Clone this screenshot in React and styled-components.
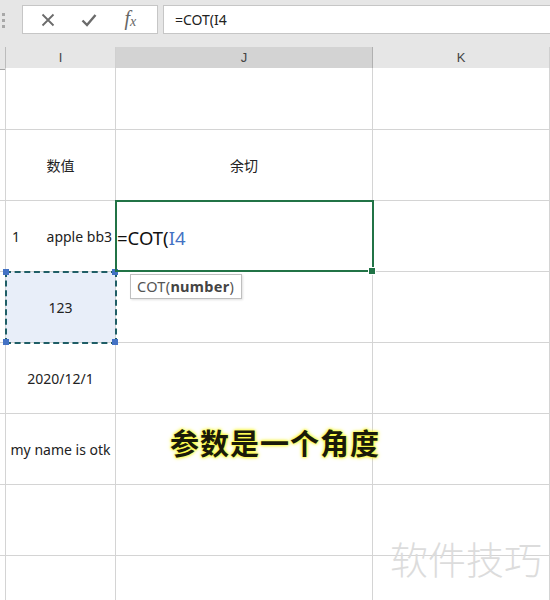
import React from 'react';
import styled, { createGlobalStyle } from 'styled-components';

const GlobalStyle = createGlobalStyle`
    html, body {
        margin: 0;
        padding: 0;
        background: #fff;
    }
    body {
        font-family: "Noto Sans", "Noto Sans CJK SC", sans-serif;
    }
`;

const COLS = '6px 110px 257px 1fr';

const rows = [
    { h: 62, i: '', j: null },
    { h: 71, i: '数值', j: '余切' },
    { h: 71, i: 'split', j: 'active' },
    { h: 71, i: '123', j: '', selected: true },
    { h: 71, i: '2020/12/1', j: '' },
    { h: 71, i: 'my name is otk', j: '' },
    { h: 71, i: '', j: '' },
    { h: 71, i: '', j: '' },
];

const Sheet = () => (
    <Page>
        <GlobalStyle />
        <FormulaBar>
            <Grip>
                <span /><span /><span />
            </Grip>
            <ButtonBox>
                <BarIcon>
                    <svg width="14" height="14" viewBox="0 0 14 14">
                        <path d="M1.5 1.5 L12.5 12.5 M12.5 1.5 L1.5 12.5" stroke="#6b6b6b" strokeWidth="1.8" fill="none" />
                    </svg>
                </BarIcon>
                <BarIcon>
                    <svg width="16" height="14" viewBox="0 0 16 14">
                        <path d="M1.5 7.5 L6 12 L14.5 2" stroke="#6b6b6b" strokeWidth="2.4" fill="none" />
                    </svg>
                </BarIcon>
                <BarIcon>
                    <Fx>f<sub>x</sub></Fx>
                </BarIcon>
            </ButtonBox>
            <FormulaInput>=COT(I4</FormulaInput>
        </FormulaBar>

        <HeaderRow>
            <HeadCell />
            <HeadCell>I</HeadCell>
            <HeadCell active>J</HeadCell>
            <HeadCell>K</HeadCell>
        </HeaderRow>

        {rows.map((r, idx) => (
            <Row key={idx} style={{ height: r.h }}>
                <Gutter />
                <Cell selected={r.selected}>
                    {r.i === 'split' ? (
                        <Split>
                            <span>1</span>
                            <span>apple bb3</span>
                        </Split>
                    ) : r.i}
                    {r.selected && (
                        <>
                            <Handle style={{ left: -3, top: -3 }} />
                            <Handle style={{ right: -3, top: -3 }} />
                            <Handle style={{ left: -3, bottom: -3 }} />
                            <Handle style={{ right: -3, bottom: -3 }} />
                        </>
                    )}
                </Cell>
                {r.j === 'active' ? (
                    <ActiveCell>
                        <Formula>=COT(<Ref>I4</Ref></Formula>
                        <FillHandle />
                        <Tip>COT(<b>number</b>)</Tip>
                    </ActiveCell>
                ) : (
                    <Cell>{r.j}</Cell>
                )}
                <Cell />
            </Row>
        ))}

        <Caption>参数是一个角度</Caption>
        <Watermark>软件技巧</Watermark>
    </Page>
);

const Page = styled.div`
    position: relative;
    width: 550px;
    height: 600px;
    overflow: hidden;
    background: #fff;
`;

const FormulaBar = styled.div`
    height: 47px;
    background: #e6e6e6;
    display: flex;
    align-items: flex-start;
    padding-top: 5px;
    box-sizing: border-box;
`;

const Grip = styled.div`
    width: 22px;
    display: flex;
    flex-direction: column;
    gap: 3px;
    padding: 8px 0 0 2px;
    box-sizing: border-box;
    & span {
        width: 3px;
        height: 3px;
        background: #a8a8a8;
    }
`;

const ButtonBox = styled.div`
    width: 136px;
    height: 29px;
    background: #fff;
    border: 1px solid #c6c6c6;
    box-sizing: border-box;
    display: flex;
    align-items: center;
    justify-content: space-around;
    padding: 0 6px 0 4px;
`;

const BarIcon = styled.div`
    width: 30px;
    display: flex;
    justify-content: center;
    align-items: center;
`;

const Fx = styled.span`
    font-family: "Liberation Serif", serif;
    font-style: italic;
    font-size: 20px;
    line-height: 20px;
    color: #666;
    & sub {
        font-size: 14px;
        vertical-align: -1px;
    }
`;

const FormulaInput = styled.div`
    flex: 1;
    height: 29px;
    margin-left: 5px;
    background: #fff;
    border: 1px solid #c6c6c6;
    border-right: none;
    box-sizing: border-box;
    padding-left: 11px;
    font-size: 14px;
    line-height: 27px;
    color: #222;
`;

const HeaderRow = styled.div`
    display: grid;
    grid-template-columns: ${COLS};
    height: 21px;
`;

const HeadCell = styled.div`
    background: ${p => (p.active ? '#d3d3d3' : '#e6e6e6')};
    border-right: 1px solid ${p => (p.active ? '#b0b0b0' : '#d0d0d0')};
    border-bottom: ${p => (p.active ? '2px solid #217346' : '1px solid #a6a6a6')};
    box-sizing: border-box;
    font-family: "Liberation Sans", sans-serif;
    font-size: 13px;
    color: #444;
    text-align: center;
    line-height: 21px;
    &:first-child {
        background: #e6e6e6;
        border-right-color: #bcbcbc;
    }
`;

const Row = styled.div`
    display: grid;
    grid-template-columns: ${COLS};
`;

const Gutter = styled.div`
    border-right: 1px solid #d4d4d4;
    border-bottom: 1px solid #d4d4d4;
    box-sizing: border-box;
`;

const Cell = styled.div`
    position: relative;
    display: flex;
    align-items: center;
    justify-content: center;
    border-right: 1px solid #d4d4d4;
    border-bottom: 1px solid #d4d4d4;
    box-sizing: border-box;
    font-size: 14px;
    color: #222;
    white-space: nowrap;
    background: ${p => (p.selected ? '#e8eef9' : '#fff')};
    ${p => p.selected && `
        outline: 2px dashed #1f5e66;
        outline-offset: -1px;
        z-index: 2;
    `}
`;

const Split = styled.div`
    width: 100%;
    display: flex;
    justify-content: space-between;
    padding: 0 3px 0 6px;
    box-sizing: border-box;
`;

const Handle = styled.span`
    position: absolute;
    width: 6px;
    height: 6px;
    background: #4472c4;
`;

const ActiveCell = styled.div`
    position: relative;
    display: flex;
    align-items: center;
    border-right: 1px solid #d4d4d4;
    border-bottom: 1px solid #d4d4d4;
    box-sizing: border-box;
    z-index: 3;
    &::after {
        content: '';
        position: absolute;
        left: -1px;
        top: -1px;
        right: -2px;
        bottom: -1px;
        border: 2px solid #217346;
        pointer-events: none;
    }
`;

const Formula = styled.span`
    font-size: 18.5px;
    color: #111;
    padding-left: 1px;
    margin-top: 2px;
`;

const Ref = styled.span`
    color: #4472c4;
`;

const FillHandle = styled.span`
    position: absolute;
    right: -4px;
    bottom: -4px;
    width: 6px;
    height: 6px;
    background: #217346;
    border: 1px solid #fff;
    z-index: 1;
`;

const Tip = styled.div`
    position: absolute;
    left: 14px;
    top: calc(100% + 3px);
    padding: 1px 7px 2px 6px;
    background: #fff;
    border: 1px solid #bfbfbf;
    box-shadow: 1px 1px 2px rgba(0, 0, 0, 0.12);
    font-size: 14.5px;
    letter-spacing: 0.3px;
    color: #555;
    white-space: nowrap;
    & b {
        color: #444;
        font-weight: 700;
    }
`;

const Caption = styled.div`
    position: absolute;
    left: 170px;
    top: 421px;
    font-family: "Noto Sans CJK SC", sans-serif;
    font-weight: 700;
    font-size: 29px;
    color: #1a1a0a;
    letter-spacing: 1px;
    text-shadow: 0 0 2px #ffff44, 0 0 3px #ffff44, 0 0 4px #f0ee20;
`;

const Watermark = styled.div`
    position: absolute;
    left: 390px;
    top: 530px;
    font-family: "Noto Sans CJK SC", sans-serif;
    font-weight: 300;
    font-size: 38px;
    color: #dcdcdc;
`;

export default Sheet;
